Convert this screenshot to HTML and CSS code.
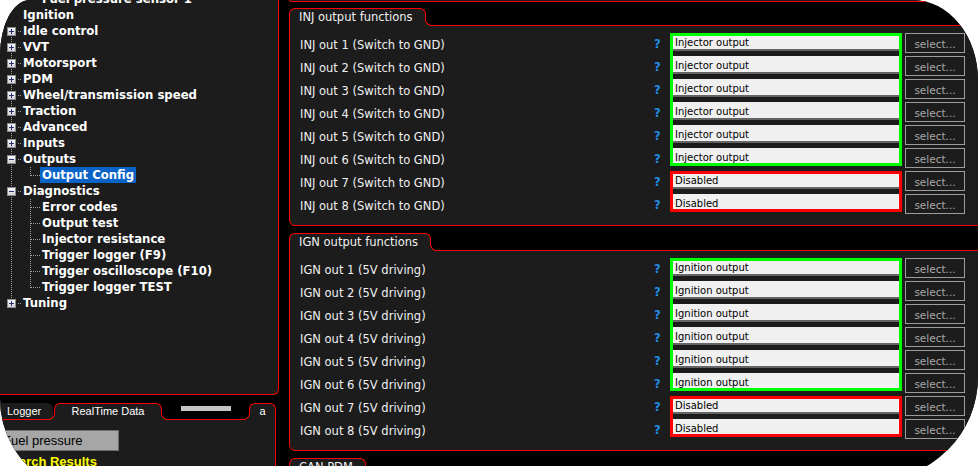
FILE: index.html
```html
<!DOCTYPE html>
<html>
<head>
<meta charset="utf-8">
<link rel="stylesheet" href="styles.css">
</head>
<body>
<div class="app">
  <div class="left">
    <div class="tree-panel">
      <div class="tree">
        <div class="row"><span class="c vf"></span><span class="k vt h"></span><span class="t">Fuel pressure sensor 1</span></div>
        <div class="row"><span class="k"></span><span class="t">Ignition</span></div>
        <div class="row"><span class="k vb hb"><i class="bx p"></i></span><span class="t">Idle control</span></div>
        <div class="row"><span class="k vf hb"><i class="bx p"></i></span><span class="t">VVT</span></div>
        <div class="row"><span class="k vf hb"><i class="bx p"></i></span><span class="t">Motorsport</span></div>
        <div class="row"><span class="k vf hb"><i class="bx p"></i></span><span class="t">PDM</span></div>
        <div class="row"><span class="k vf hb"><i class="bx p"></i></span><span class="t">Wheel/transmission speed</span></div>
        <div class="row"><span class="k vf hb"><i class="bx p"></i></span><span class="t">Traction</span></div>
        <div class="row"><span class="k vf hb"><i class="bx p"></i></span><span class="t">Advanced</span></div>
        <div class="row"><span class="k vf hb"><i class="bx p"></i></span><span class="t">Inputs</span></div>
        <div class="row"><span class="k vf hb"><i class="bx m"></i></span><span class="t">Outputs</span></div>
        <div class="row"><span class="c vf"></span><span class="k vt h"></span><span class="t sel">Output Config</span></div>
        <div class="row"><span class="k vf hb"><i class="bx m"></i></span><span class="t">Diagnostics</span></div>
        <div class="row"><span class="c vf"></span><span class="k vf h"></span><span class="t">Error codes</span></div>
        <div class="row"><span class="c vf"></span><span class="k vf h"></span><span class="t">Output test</span></div>
        <div class="row"><span class="c vf"></span><span class="k vf h"></span><span class="t">Injector resistance</span></div>
        <div class="row"><span class="c vf"></span><span class="k vf h"></span><span class="t">Trigger logger (F9)</span></div>
        <div class="row"><span class="c vf"></span><span class="k vf h"></span><span class="t">Trigger oscilloscope (F10)</span></div>
        <div class="row"><span class="c vf"></span><span class="k vt h"></span><span class="t">Trigger logger TEST</span></div>
        <div class="row"><span class="k vt hb"><i class="bx p"></i></span><span class="t">Tuning</span></div>
      </div>
    </div>
    <div class="dock">
      <div class="tabstrip">
        <div class="tab-in">Logger</div>
        <div class="flare fl-l"></div>
        <div class="tab-act rt">RealTime Data</div>
        <div class="flare fl-r"></div>
        <div class="tab-gap"><div class="thumb"></div></div>
        <div class="flare fl-l"></div>
        <div class="tab-act ta">a</div>
      </div>
      <div class="dock-body">
        <div class="search-box">Fuel pressure</div>
        <div class="search-title">Search Results</div>
      </div>
    </div>
  </div>

  <div class="right">
    <div class="sec-prev"></div>

    <section class="sec">
      <div class="sec-head"><div class="sec-tab">INJ output functions</div><div class="flare fl-r"></div></div>
      <div class="sec-body grid">
        <div class="lbl">INJ out 1 (Switch to GND)</div><div class="q">?</div>
        <div class="grp n6 ok">
          <div class="fld">Injector output</div>
          <div class="fld">Injector output</div>
          <div class="fld">Injector output</div>
          <div class="fld">Injector output</div>
          <div class="fld">Injector output</div>
          <div class="fld">Injector output</div>
        </div>
        <div class="btn">select...</div>
        <div class="lbl">INJ out 2 (Switch to GND)</div><div class="q">?</div><div class="btn">select...</div>
        <div class="lbl">INJ out 3 (Switch to GND)</div><div class="q">?</div><div class="btn">select...</div>
        <div class="lbl">INJ out 4 (Switch to GND)</div><div class="q">?</div><div class="btn">select...</div>
        <div class="lbl">INJ out 5 (Switch to GND)</div><div class="q">?</div><div class="btn">select...</div>
        <div class="lbl">INJ out 6 (Switch to GND)</div><div class="q">?</div><div class="btn">select...</div>
        <div class="lbl">INJ out 7 (Switch to GND)</div><div class="q">?</div>
        <div class="grp n2 off">
          <div class="fld">Disabled</div>
          <div class="fld">Disabled</div>
        </div>
        <div class="btn">select...</div>
        <div class="lbl">INJ out 8 (Switch to GND)</div><div class="q">?</div><div class="btn">select...</div>
      </div>
    </section>

    <section class="sec">
      <div class="sec-head"><div class="sec-tab">IGN output functions</div><div class="flare fl-r"></div></div>
      <div class="sec-body grid">
        <div class="lbl">IGN out 1 (5V driving)</div><div class="q">?</div>
        <div class="grp n6 ok">
          <div class="fld">Ignition output</div>
          <div class="fld">Ignition output</div>
          <div class="fld">Ignition output</div>
          <div class="fld">Ignition output</div>
          <div class="fld">Ignition output</div>
          <div class="fld">Ignition output</div>
        </div>
        <div class="btn">select...</div>
        <div class="lbl">IGN out 2 (5V driving)</div><div class="q">?</div><div class="btn">select...</div>
        <div class="lbl">IGN out 3 (5V driving)</div><div class="q">?</div><div class="btn">select...</div>
        <div class="lbl">IGN out 4 (5V driving)</div><div class="q">?</div><div class="btn">select...</div>
        <div class="lbl">IGN out 5 (5V driving)</div><div class="q">?</div><div class="btn">select...</div>
        <div class="lbl">IGN out 6 (5V driving)</div><div class="q">?</div><div class="btn">select...</div>
        <div class="lbl">IGN out 7 (5V driving)</div><div class="q">?</div>
        <div class="grp n2 off">
          <div class="fld">Disabled</div>
          <div class="fld">Disabled</div>
        </div>
        <div class="btn">select...</div>
        <div class="lbl">IGN out 8 (5V driving)</div><div class="q">?</div><div class="btn">select...</div>
      </div>
    </section>

    <section class="sec">
      <div class="sec-head"><div class="sec-tab">CAN PDM</div><div class="flare fl-r"></div></div>
      <div class="sec-body stub"></div>
    </section>
  </div>
</div>
</body>
</html>
```

FILE: styles.css
```css
html, body {
  margin: 0;
  height: 100%;
  overflow: hidden;
  background: #fff;
}

.app {
  width: 978px;
  height: 480px;
  background: #000;
  display: flex;
  align-items: flex-start;
  overflow: hidden;
  clip-path: path("M 30 0 L 913 0 A 65 80 0 0 1 978 80 L 978 377 A 103 103 0 0 1 875 480 L 46.3 480 A 94 94 0 0 1 0 399 L 0 55 A 30 55 0 0 1 30 0 Z");
  font-family: "DejaVu Sans", Verdana, sans-serif;
}

/* ---------- left column ---------- */
.left {
  width: 279px;
  flex: none;
}

.tree-panel {
  height: 395px;
  box-sizing: border-box;
  background: #1c1c1c;
  border-right: 1px solid #f00;
  border-bottom: 1px solid #f00;
  border-bottom-right-radius: 6px;
  overflow: hidden;
}

.tree {
  margin-top: -9px;
}

.row {
  display: flex;
  height: 16px;
}

.c, .k {
  flex: none;
  height: 16px;
  background-image: var(--vimg, none), var(--himg, none);
  background-repeat: no-repeat;
  background-position: 11px var(--vy, 0px), var(--hx, 12px) 8px;
  background-size: 1px var(--vh, 16px), var(--hw, 10px) 1px;
}

.c { width: 19px; }
.k { width: 23px; display: flex; align-items: flex-start; }

.vf { --vimg: repeating-linear-gradient(#a0a0a0 0 1px, transparent 1px 2px); }
.vt { --vimg: repeating-linear-gradient(#a0a0a0 0 1px, transparent 1px 2px); --vh: 9px; }
.vb { --vimg: repeating-linear-gradient(#a0a0a0 0 1px, transparent 1px 2px); --vy: 8px; --vh: 8px; }
.h  { --himg: repeating-linear-gradient(90deg, #a0a0a0 0 1px, transparent 1px 2px); }
.hb { --himg: repeating-linear-gradient(90deg, #a0a0a0 0 1px, transparent 1px 2px); --hx: 18px; --hw: 4px; }

.bx {
  display: block;
  width: 9px;
  height: 9px;
  margin: 4px 0 0 7px;
  box-sizing: border-box;
  border: 1px solid #8c8c8c;
}
.bx.p {
  background:
    linear-gradient(#26317a, #26317a) 1px 3px / 5px 1px no-repeat,
    linear-gradient(#26317a, #26317a) 3px 1px / 1px 5px no-repeat,
    linear-gradient(#fafafa, #d4d4d4);
}
.bx.m {
  background:
    linear-gradient(#26317a, #26317a) 1px 3px / 5px 1px no-repeat,
    linear-gradient(#fafafa, #d4d4d4);
}

.t {
  font-weight: bold;
  font-size: 11.7px;
  line-height: 16px;
  color: #fff;
  white-space: nowrap;
}
.t.sel {
  background: #0a64c8;
  padding: 0 2px;
  margin-left: -2px;
}

/* dock */
.dock {
  margin-top: 8px;
  width: 276px;
  font-family: "Liberation Sans", Arial, sans-serif;
  font-size: 11px;
  color: #fff;
}

.tabstrip {
  display: flex;
  align-items: flex-end;
  height: 16px;
  position: relative;
  z-index: 1;
}

.tab-in {
  width: 53px;
  height: 16px;
  flex: none;
  box-sizing: border-box;
  padding-left: 7px;
  line-height: 16px;
  background: #1c1c1c;
  border-top-right-radius: 6px;
}

.tab-act {
  flex: none;
  height: 17px;
  margin-bottom: -1px;
  box-sizing: border-box;
  border: 1px solid #f00;
  border-bottom: 0;
  border-radius: 6px 6px 0 0;
  background: #1c1c1c;
  text-align: center;
  line-height: 15px;
  z-index: 1;
}
.tab-act.rt { width: 108px; }
.tab-act.ta { width: 27px; }

.flare {
  flex: none;
  width: 7px;
  height: 7px;
  z-index: 2;
}
.fl-l {
  margin: 0 -1px -1px -5px;
  background: radial-gradient(circle at 0 0, transparent 5.8px, #f00 6.2px, #f00 6.8px, #1c1c1c 7.2px);
}
.fl-r {
  margin: 0 0 -1px -1px;
  background: radial-gradient(circle at 100% 0, transparent 5.8px, #f00 6.2px, #f00 6.8px, #1c1c1c 7.2px);
}

.tab-gap {
  flex: none;
  width: 80px;
  align-self: stretch;
}
.thumb {
  margin: 3px 0 0 13px;
  width: 50px;
  height: 5px;
  background: #c4c4c4;
}

.dock-body {
  height: 80px;
  background: #1c1c1c;
  border-top: 1px solid #f00;
  border-right: 1px solid #f00;
  overflow: hidden;
}

.search-box {
  margin-top: 10px;
  width: 119px;
  height: 21px;
  box-sizing: border-box;
  border: 1px solid #6e6e6e;
  background: #a6a6a6;
  color: #000;
  font-size: 13px;
  line-height: 15px;
  padding: 2px 0 0 2px;
}

.search-title {
  margin: 3px 0 0 3px;
  font-size: 13px;
  font-weight: bold;
  line-height: 15px;
  color: #ff0;
}

/* ---------- right column ---------- */
.right {
  margin-left: 10px;
  width: 700px;
  flex: none;
}

.sec-prev {
  height: 2px;
  box-sizing: border-box;
  border: 1px solid #f00;
  border-top: 0;
  border-radius: 0 0 4px 4px;
  background: #1c1c1c;
  margin-bottom: 6px;
}

.sec + .sec {
  margin-top: 7px;
}

.sec-head {
  display: flex;
  align-items: flex-end;
  height: 17px;
  position: relative;
  z-index: 1;
}

.sec-tab {
  flex: none;
  height: 18px;
  margin-bottom: -1px;
  box-sizing: border-box;
  border: 1px solid #f00;
  border-bottom: 0;
  border-radius: 6px 6px 0 0;
  background: #1c1c1c;
  padding: 0 12px 0 9px;
  font-size: 11.5px;
  line-height: 17px;
  color: #f0f0f0;
  white-space: nowrap;
  z-index: 1;
}

.sec-body {
  background: #1c1c1c;
  border: 1px solid #f00;
  border-radius: 0 6px 6px 6px;
  padding: 7px 0 8px 10px;
}
.sec-body.stub {
  height: 40px;
}

.grid {
  display: grid;
  grid-template-columns: 354px 16px 232px 63px;
  grid-auto-rows: 23px;
}

.lbl {
  grid-column: 1;
  padding-top: 1px;
  font-size: 11.5px;
  line-height: 23px;
  color: #f0f0f0;
  white-space: nowrap;
}

.q {
  grid-column: 2;
  font-size: 11.5px;
  font-weight: bold;
  line-height: 22px;
  color: #1f8fe6;
}

.grp {
  grid-column: 3;
  align-self: start;
  display: flex;
  flex-direction: column;
  gap: 5px;
}
.grp.n6 { grid-row: span 6; }
.grp.n2 { grid-row: span 2; }
.grp.ok { outline: 3px solid #00ff00; outline-offset: -3px; }
.grp.off { outline: 3px solid #ff0000; outline-offset: -3px; }

.fld {
  height: 18px;
  box-sizing: border-box;
  background: #f0f0f0;
  border-bottom: 2px solid #646464;
  padding: 3px 0 0 5px;
  font-size: 10px;
  line-height: 13px;
  color: #000;
  white-space: nowrap;
}

.btn {
  grid-column: 4;
  margin-left: 3px;
  width: 60px;
  height: 20px;
  box-sizing: border-box;
  border: 1px solid #9c9c9c;
  padding-top: 3px;
  font-size: 10.5px;
  line-height: 15px;
  text-align: center;
  color: #a8a8a8;
}
```
